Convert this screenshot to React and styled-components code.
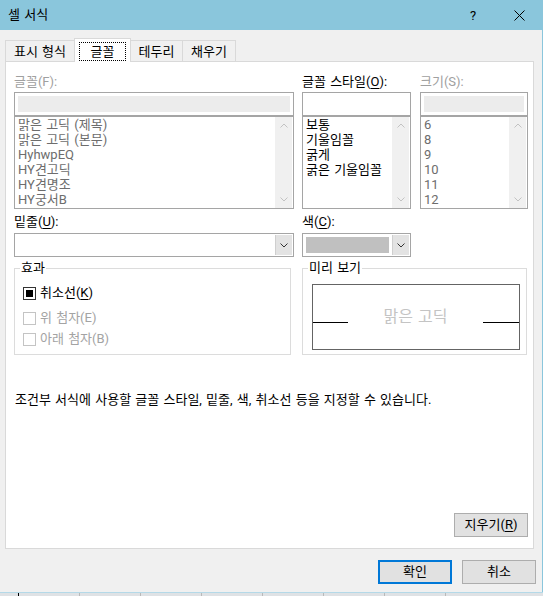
import React from "react";
import styled, { createGlobalStyle } from "styled-components";

const Global = createGlobalStyle`
  html, body { margin: 0; padding: 0; background: #f0f0f0; }
  body {
    font-family: Roboto, "Noto Sans CJK KR", sans-serif;
    font-size: 13px;
    word-spacing: 1px;
    color: #000;
  }
  * { box-sizing: border-box; }
`;

const Window = styled.div`
  width: 543px;
  height: 596px;
  display: flex;
  flex-direction: column;
  overflow: hidden;
  background: #f0f0f0;
`;

const TitleBar = styled.div`
  height: 30px;
  flex: none;
  background: #8ac6dc;
  display: flex;
  align-items: center;
  padding: 0 1px 0 8px;
`;

const Title = styled.div`
  flex: 1;
  line-height: 16px;
`;

const TitleButton = styled.div`
  width: 46px;
  height: 30px;
  display: flex;
  align-items: center;
  justify-content: center;
  font-size: 13px;
`;

const Body = styled.div`
  flex: 1;
  display: flex;
  flex-direction: column;
  border-right: 1px solid #8ac6dc;
`;

const TabRow = styled.div`
  display: flex;
  align-items: flex-end;
  height: 23px;
  margin: 8px 0 0 5px;
  position: relative;
  z-index: 1;
`;

const Tab = styled.div`
  width: ${(p) => p.$w}px;
  height: ${(p) => (p.$active ? 24 : 21)}px;
  margin-bottom: ${(p) => (p.$active ? -1 : 0)}px;
  margin-left: ${(p) => (p.$first ? 0 : -1)}px;
  border: 1px solid #d9d9d9;
  border-bottom: none;
  background: ${(p) => (p.$active ? "#fff" : "#f0f0f0")};
  display: flex;
  align-items: ${(p) => (p.$active ? "flex-start" : "center")};
  justify-content: center;
  padding-top: ${(p) => (p.$active ? 3 : 2)}px;
  line-height: 16px;
  white-space: nowrap;
  position: relative;
  z-index: ${(p) => (p.$active ? 2 : 1)};
`;

const FocusRect = styled.span`
  width: 47px;
  height: 19px;
  border: 1px dotted #000;
  display: flex;
  align-items: center;
  justify-content: center;
  padding-top: 1px;
`;

const Panel = styled.div`
  flex: none;
  height: 488px;
  margin: 0 8px 0 5px;
  background: #fff;
  border: 1px solid #d9d9d9;
  padding: 12px 5px 0 8px;
  display: flex;
  flex-direction: column;
`;

const FieldGrid = styled.div`
  display: grid;
  grid-template-columns: 288px 118px 108px;
`;

const Column = styled.div`
  display: flex;
  flex-direction: column;
  width: ${(p) => p.$w}px;
`;

const Label = styled.div`
  height: 16px;
  line-height: 16px;
  margin: ${(p) => p.$mt || 0}px 0 ${(p) => p.$mb ?? 2}px 0;
  color: ${(p) => (p.$disabled ? "#a0a0a0" : "#000")};
  white-space: nowrap;
`;

const U = styled.span`
  text-decoration: underline;
  text-underline-offset: 2px;
`;

const TextField = styled.div`
  height: 24px;
  border: 1px solid #a5a5a5;
  padding: 3px;
  background: #fff;
`;

const TextFill = styled.div`
  height: 100%;
  background: ${(p) => (p.$disabled ? "#ececec" : "transparent")};
`;

const ListBox = styled.div`
  height: 93px;
  border: 1px solid #a5a5a5;
  background: #fff;
  display: flex;
`;

const Items = styled.div`
  flex: 1;
  padding: 0 0 0 3px;
  overflow: hidden;
`;

const Item = styled.div`
  line-height: 15px;
  height: 15px;
  white-space: nowrap;
  color: ${(p) => (p.$disabled ? "#6d6d6d" : "#000")};
`;

const ScrollBar = styled.div`
  width: 17px;
  margin: 0 1px 0 0;
  background: #f0f0f0;
  display: flex;
  flex-direction: column;
  justify-content: space-between;
`;

const ScrollArrow = styled.div`
  height: 17px;
  display: flex;
  align-items: center;
  justify-content: center;
`;

const Combo = styled.div`
  height: 24px;
  border: 1px solid #a5a5a5;
  background: #fff;
  display: flex;
  padding: 1px;
`;

const Swatch = styled.div`
  flex: 1;
  margin: 2px 3px 2px 2px;
  background: #c0c0c0;
`;

const ComboSpace = styled.div`
  flex: 1;
`;

const DropButton = styled.div`
  width: 17px;
  background: #e3e3e3;
  border-left: 1px solid #cfcfcf;
  display: flex;
  align-items: center;
  justify-content: center;
`;

const GroupRow = styled.div`
  display: grid;
  grid-template-columns: 288px 225px;
  margin-top: 11px;
`;

const Group = styled.div`
  width: ${(p) => p.$w}px;
  height: 87px;
  border: 1px solid #dcdcdc;
  display: flex;
  flex-direction: column;
`;

const Legend = styled.div`
  width: fit-content;
  height: 16px;
  line-height: 16px;
  margin: -9px 0 0 5px;
  padding: 0 1px;
  background: #fff;
`;

const CheckRow = styled.div`
  display: flex;
  align-items: center;
  gap: 4px;
  height: 16px;
  margin-top: ${(p) => p.$mt}px;
  padding-left: 8px;
  line-height: 16px;
  color: ${(p) => (p.$disabled ? "#a3a3a3" : "#000")};
`;

const CheckBox = styled.span`
  width: 13px;
  height: 13px;
  border: 1px solid ${(p) => (p.$disabled ? "#c4c4c4" : "#333")};
  background: #fff;
  display: flex;
  align-items: center;
  justify-content: center;
`;

const CheckFill = styled.span`
  width: 7px;
  height: 7px;
  background: #000;
`;

const PreviewBox = styled.div`
  height: 66px;
  margin: 8px 6px 0 9px;
  border: 1px solid #646464;
  display: flex;
  align-items: center;
`;

const PreviewLine = styled.span`
  width: ${(p) => p.$w}px;
  height: 1px;
  margin-top: 11px;
  background: #000;
`;

const PreviewText = styled.span`
  flex: 1;
  text-align: center;
  font-size: 16px;
  line-height: 18px;
  color: #c4c4c4;
`;

const Description = styled.div`
  margin-top: 37px;
  line-height: 16px;
  padding-left: 1px;
  white-space: nowrap;
`;

const Button = styled.div`
  width: 74px;
  height: 24px;
  background: #e1e1e1;
  border: ${(p) => (p.$primary ? "2px solid #0078d7" : "1px solid #adadad")};
  display: flex;
  align-items: center;
  justify-content: center;
  line-height: 16px;
`;

const ClearButton = styled(Button)`
  margin-top: auto;
  margin-bottom: 11px;
  align-self: flex-end;
`;

const Footer = styled.div`
  display: flex;
  justify-content: flex-end;
  gap: 10px;
  padding: 11px 6px 0 0;
`;

const Strip = styled.div`
  height: 4px;
  flex: none;
  background: #dfe2e5;
  border-top: 1px solid #b4d9e8;
  display: flex;
  padding-left: 18px;
`;

const StripCell = styled.div`
  width: 61px;
  border-left: 1px solid ${(p) => (p.$dark ? "#000" : "#b9b9b9")};
`;

const UpChevron = () => (
  <svg width="8" height="5" viewBox="0 0 8 5">
    <polyline points="0.5,4.5 4,1 7.5,4.5" fill="none" stroke="#c2c2c2" strokeWidth="1" />
  </svg>
);

const DownChevron = ({ color = "#c2c2c2" }) => (
  <svg width="8" height="5" viewBox="0 0 8 5">
    <polyline points="0.5,0.5 4,4 7.5,0.5" fill="none" stroke={color} strokeWidth="1" />
  </svg>
);

const Scroll = () => (
  <ScrollBar>
    <ScrollArrow>
      <UpChevron />
    </ScrollArrow>
    <ScrollArrow>
      <DownChevron />
    </ScrollArrow>
  </ScrollBar>
);

const fonts = ["맑은 고딕 (제목)", "맑은 고딕 (본문)", "HyhwpEQ", "HY견고딕", "HY견명조", "HY궁서B"];
const styles = ["보통", "기울임꼴", "굵게", "굵은 기울임꼴"];
const sizes = ["6", "8", "9", "10", "11", "12"];

export default function App() {
  return (
    <Window>
      <Global />
      <TitleBar>
        <Title>셀 서식</Title>
        <TitleButton>?</TitleButton>
        <TitleButton>
          <svg width="11" height="11" viewBox="0 0 11 11">
            <line x1="0.5" y1="0.5" x2="10.5" y2="10.5" stroke="#000" strokeWidth="1" />
            <line x1="10.5" y1="0.5" x2="0.5" y2="10.5" stroke="#000" strokeWidth="1" />
          </svg>
        </TitleButton>
      </TitleBar>
      <Body>
        <TabRow>
          <Tab $w={70} $first>표시 형식</Tab>
          <Tab $w={57} $active>
            <FocusRect>글꼴</FocusRect>
          </Tab>
          <Tab $w={53}>테두리</Tab>
          <Tab $w={54}>채우기</Tab>
        </TabRow>
        <Panel>
          <FieldGrid>
            <Column $w={280}>
              <Label $disabled>글꼴(F):</Label>
              <TextField>
                <TextFill $disabled />
              </TextField>
              <ListBox>
                <Items>
                  {fonts.map((f) => (
                    <Item key={f} $disabled>{f}</Item>
                  ))}
                </Items>
                <Scroll />
              </ListBox>
            </Column>
            <Column $w={109}>
              <Label>
                글꼴 스타일(<U>O</U>):
              </Label>
              <TextField>
                <TextFill />
              </TextField>
              <ListBox>
                <Items>
                  {styles.map((s) => (
                    <Item key={s}>{s}</Item>
                  ))}
                </Items>
                <Scroll />
              </ListBox>
            </Column>
            <Column $w={108}>
              <Label $disabled>크기(S):</Label>
              <TextField>
                <TextFill $disabled />
              </TextField>
              <ListBox>
                <Items>
                  {sizes.map((s) => (
                    <Item key={s} $disabled>{s}</Item>
                  ))}
                </Items>
                <Scroll />
              </ListBox>
            </Column>
            <Column $w={280}>
              <Label $mt={5} $mb={3}>
                밑줄(<U>U</U>):
              </Label>
              <Combo>
                <ComboSpace />
                <DropButton>
                  <DownChevron color="#333" />
                </DropButton>
              </Combo>
            </Column>
            <Column $w={109}>
              <Label $mt={5} $mb={3}>
                색(<U>C</U>):
              </Label>
              <Combo>
                <Swatch />
                <DropButton>
                  <DownChevron color="#333" />
                </DropButton>
              </Combo>
            </Column>
          </FieldGrid>
          <GroupRow>
            <Group $w={277}>
              <Legend>효과</Legend>
              <CheckRow $mt={9}>
                <CheckBox>
                  <CheckFill />
                </CheckBox>
                <span>
                  취소선(<U>K</U>)
                </span>
              </CheckRow>
              <CheckRow $mt={9} $disabled>
                <CheckBox $disabled />
                <span>위 첨자(E)</span>
              </CheckRow>
              <CheckRow $mt={5} $disabled>
                <CheckBox $disabled />
                <span>아래 첨자(B)</span>
              </CheckRow>
            </Group>
            <Group $w={225}>
              <Legend>미리 보기</Legend>
              <PreviewBox>
                <PreviewLine $w={35} />
                <PreviewText>맑은 고딕</PreviewText>
                <PreviewLine $w={36} />
              </PreviewBox>
            </Group>
          </GroupRow>
          <Description>
            조건부 서식에 사용할 글꼴 스타일, 밑줄, 색, 취소선 등을 지정할 수 있습니다.
          </Description>
          <ClearButton>
            지우기(<U>R</U>)
          </ClearButton>
        </Panel>
        <Footer>
          <Button $primary>확인</Button>
          <Button>취소</Button>
        </Footer>
      </Body>
      <Strip>
        <StripCell $dark />
        <StripCell />
        <StripCell />
        <StripCell />
        <StripCell />
        <StripCell />
        <StripCell />
        <StripCell />
      </Strip>
    </Window>
  );
}
